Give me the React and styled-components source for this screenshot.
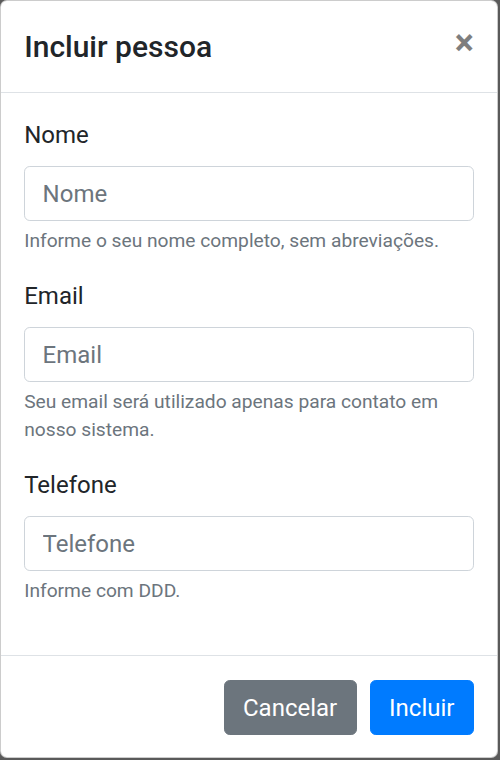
import styled, { createGlobalStyle } from "styled-components";

const fields = [
  { id: "nome", label: "Nome", type: "text", help: "Informe o seu nome completo, sem abreviações." },
  { id: "email", label: "Email", type: "email", help: "Seu email será utilizado apenas para contato em nosso sistema." },
  { id: "telefone", label: "Telefone", type: "tel", help: "Informe com DDD." },
];

const GlobalStyle = createGlobalStyle`
  html, body {
    margin: 0;
    padding: 0;
    background: #5a5a5a;
  }
  body {
    font-family: Roboto, "Liberation Sans", Arial, sans-serif;
    color: #212529;
  }
  * {
    box-sizing: border-box;
  }
`;

const App = () => (
  <>
    <GlobalStyle />
    <Modal role="dialog">
      <Header>
        <Title>Incluir pessoa</Title>
        <CloseButton type="button" aria-label="Close">
          ×
        </CloseButton>
      </Header>

      <Body>
        {fields.map(({ id, label, type, help }) => (
          <FormGroup key={id}>
            <Label htmlFor={id}>{label}</Label>
            <Input id={id} type={type} placeholder={label} />
            <Help>{help}</Help>
          </FormGroup>
        ))}
      </Body>

      <Footer>
        <Button type="button" variant="secondary">
          Cancelar
        </Button>
        <Button type="button" variant="primary">
          Incluir
        </Button>
      </Footer>
    </Modal>
  </>
);

// styles
const Modal = styled.div`
  width: 498px;
  background: #fff;
  border: 1px solid rgba(0, 0, 0, 0.2);
  border-radius: 7px;
  display: flex;
  flex-direction: column;
`;

const Header = styled.div`
  display: flex;
  align-items: flex-start;
  justify-content: space-between;
  padding: 23.5px 23.2px;
  border-bottom: 1px solid #dee2e6;
`;

const Title = styled.h5`
  margin: 0;
  font-size: 30px;
  font-weight: 500;
  line-height: 44px;
  color: #212529;
`;

const CloseButton = styled.button`
  padding: 23.2px;
  margin: -23.2px -23.2px -23.2px auto;
  background: transparent;
  border: 0;
  font-family: inherit;
  font-size: 36px;
  font-weight: 700;
  line-height: 1;
  color: #000;
  opacity: 0.5;
  cursor: pointer;
`;

const Body = styled.div`
  padding: 23.5px 23.2px 27px;
`;

const FormGroup = styled.div`
  display: flex;
  flex-direction: column;
  margin-bottom: 23.2px;
`;

const Label = styled.label`
  font-size: 24px;
  line-height: 37px;
  margin-bottom: 12.5px;
`;

const Input = styled.input`
  height: 55px;
  padding: 8.7px 17.4px;
  font-family: inherit;
  font-size: 24px;
  line-height: 1.5;
  color: #495057;
  background: #fff;
  border: 1px solid #ced4da;
  border-radius: 5.8px;
  outline: none;

  &::placeholder {
    color: #6c757d;
    opacity: 1;
  }
`;

const Help = styled.small`
  display: block;
  margin-top: 5.5px;
  font-size: 19.2px;
  line-height: 28px;
  color: #6c757d;
`;

const Footer = styled.div`
  display: flex;
  align-items: center;
  justify-content: flex-end;
  gap: 13px;
  padding: 24px 23.2px 22px;
  border-top: 1px solid #dee2e6;
`;

const Button = styled.button`
  height: 55px;
  padding: 8.7px 18.4px;
  font-family: inherit;
  font-size: 24px;
  line-height: 1.5;
  color: #fff;
  background: ${(p) => (p.variant === "primary" ? "#007bff" : "#6c757d")};
  border: 1px solid ${(p) => (p.variant === "primary" ? "#007bff" : "#6c757d")};
  border-radius: 5.8px;
  cursor: pointer;
`;

export default App;
